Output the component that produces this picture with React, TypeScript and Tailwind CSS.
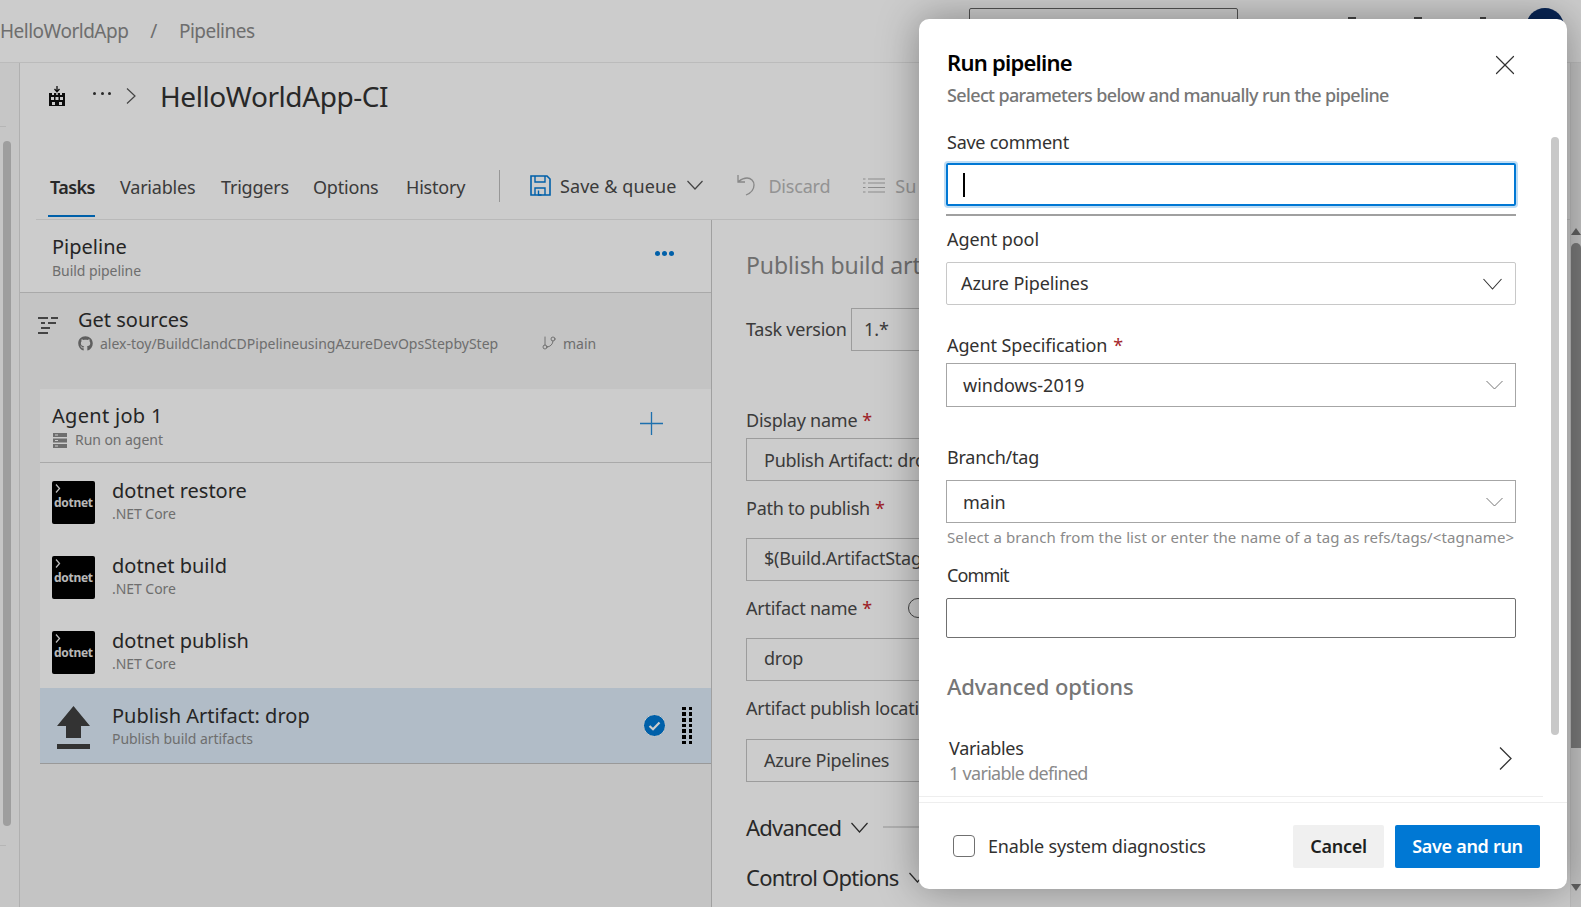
import React from "react";
import { X, GitBranch } from "lucide-react";
import { FaGithub } from "react-icons/fa";

const font = "[font-family:'Noto_Sans',sans-serif]";

function Chev({ w = 16, h = 8, color = "#333", sw = 1.2 }: { w?: number; h?: number; color?: string; sw?: number }) {
  return (
    <svg width={w} height={h + 2} viewBox={`0 0 ${w} ${h + 2}`} fill="none" className="shrink-0">
      <polyline points={`0.5,1 ${w / 2},${h + 1} ${w - 0.5},1`} stroke={color} strokeWidth={sw} />
    </svg>
  );
}

function Dotnet() {
  return (
    <div className="w-[43px] h-[43px] mt-[4px] bg-black rounded-[2px] shrink-0 flex flex-col overflow-hidden pl-[2px]">
      <svg width="6" height="9" viewBox="0 0 6 9" fill="none" className="mt-[3px] ml-[1px] shrink-0"><polyline points="1,0.5 4.5,4.5 1,8.5" stroke="#e6e6e6" strokeWidth="1.3" /></svg>
      <div className="text-[#e6e6e6] text-[12px] leading-[14px] mt-[3px] font-bold tracking-[-0.3px] whitespace-nowrap">dotnet</div>
    </div>
  );
}

function TaskRow({ name, sub, icon, selected }: { name: string; sub: string; icon: React.ReactNode; selected?: boolean }) {
  return (
    <div className={`flex items-center pl-[12px] ${selected ? "h-[76px] bg-[#deecf9] border-b border-[#c0c0c0]" : "h-[75px]"}`}>
      <div className="w-[43px] flex justify-center shrink-0">{icon}</div>
      <div className="ml-[17px] flex-1 -mt-[2px]">
        <div className="text-[20px] leading-[28px] text-[#2f2f2f]">{name}</div>
        <div className="text-[14px] leading-[18px] text-[#8a8a8a] tracking-[-0.05px]">{sub}</div>
      </div>
      {selected && (
        <div className="flex items-center mr-[19px] gap-[16px]">
          <div className="w-[23px] h-[23px] rounded-full bg-[#0078d4] border border-white flex items-center justify-center">
            <svg width="13" height="10" viewBox="0 0 13 10" fill="none"><polyline points="1.5,5 5,8.2 11.5,1.5" stroke="white" strokeWidth="2.2" /></svg>
          </div>
          <div className="grid grid-cols-2 gap-x-[3px] gap-y-[2.2px]">
            {Array.from({ length: 14 }).map((_, i) => (
              <div key={i} className="w-[3.5px] h-[3.5px] bg-black" />
            ))}
          </div>
        </div>
      )}
    </div>
  );
}

function Label({ children, star, className = "" }: { children: React.ReactNode; star?: boolean; className?: string }) {
  return (
    <div className={`text-[18px] leading-[24px] text-[#4a4a4a] tracking-[-0.25px] whitespace-nowrap ${className}`}>
      {children}
      {star && <span className="text-[#c4262e] ml-[5px]">*</span>}
    </div>
  );
}

function BgInput({ children, className = "" }: { children: React.ReactNode; className?: string }) {
  return (
    <div className={`w-[500px] h-[43px] border border-[#c4c4c4] flex items-center pl-[17px] text-[18px] text-[#4a4a4a] tracking-[-0.25px] whitespace-nowrap ${className}`}>
      {children}
    </div>
  );
}

function MLabel({ children, star, className = "" }: { children: React.ReactNode; star?: boolean; className?: string }) {
  return (
    <div className={`text-[18px] leading-[24px] text-[#323130] whitespace-nowrap ${className}`}>
      {children}
      {star && <span className="text-[#a4262c] ml-[6px]">*</span>}
    </div>
  );
}

function Tab({ children, active, w }: { children: React.ReactNode; active?: boolean; w: string }) {
  return (
    <div className={`${w} h-full flex flex-col shrink-0`}>
      <div className={`mt-[46px] text-[18px] leading-[24px] whitespace-nowrap ${active ? "font-semibold text-[#333] tracking-[-0.6px] ml-[1px]" : "text-[#4a4a4a] tracking-[-0.2px]"}`}>{children}</div>
      {active && <div className="mt-[16px] h-[2px] w-[47px] -ml-[1px] bg-[#0078d4]" />}
    </div>
  );
}

export default function App() {
  return (
    <div className={`relative w-[1581px] h-[907px] overflow-hidden bg-white flex flex-col ${font}`}>
      {/* top bar */}
      <div className="h-[63px] shrink-0 border-b border-[#eaeaea] flex">
        <div className="w-[969px] shrink-0 flex items-center text-[19px] text-[#8a8a8a] tracking-[-0.5px] whitespace-nowrap mt-[1px]">
          <span>HelloWorldApp</span>
          <span className="ml-[22px]">/</span>
          <span className="ml-[22px]">Pipelines</span>
        </div>
        <div className="w-[269px] h-[32px] mt-[8px] border border-[#666] rounded-[2px] shrink-0" />
        <div className="w-[289px] shrink-0 flex pt-[17px] pl-[110px] gap-[58px]">
          <div className="w-[8px] h-[8px] bg-[#555]" />
          <div className="w-[8px] h-[8px] bg-[#555]" />
          <div className="w-[6px] h-[8px] bg-[#555]" />
        </div>
        <div className="w-[38px] h-[38px] mt-[8px] rounded-full bg-[#0b2f6b] shrink-0 -ml-[1px]" />
      </div>

      <div className="flex-1 min-h-0 flex">
        {/* left rail */}
        <div className="w-[20px] shrink-0 border-r border-[#dcdcdc] bg-[#f8f8f8] flex flex-col">
          <div className="h-[64px] w-[6px] border-b border-[#e4e4e4] shrink-0" />
          <div className="w-[8px] h-[685px] ml-[3px] mt-[14px] rounded-[4px] bg-[#c6c6c6] shrink-0" />
          <div className="h-[1px] w-[6px] mt-[19px] bg-[#e4e4e4] shrink-0" />
        </div>

        {/* main */}
        <div className="flex-1 min-w-0 flex flex-col">
          <div className="h-[66px] shrink-0 flex items-center pl-[28px]">
            <svg width="18" height="20" viewBox="0 0 18 20" className="shrink-0">
              <path d="M9 0v4.5M6.5 3 9 5.7 11.5 3" stroke="#111" strokeWidth="1.3" fill="none" />
              <path fillRule="evenodd" d="M1 7h3v2h2V7h2.2v2h1.6V7H12v2h2V7h3v13H1zM3 11v3h3v-3zM7.5 11v3h3v-3zM12 11v3h3v-3zM4 16v3h3v-3zM11 16v3h3v-3z" fill="#111" />
            </svg>
            <span className="ml-[26px] w-[20px] -mt-[6px] flex justify-between px-[1px] shrink-0">
              <i className="w-[3px] h-[3px] rounded-full bg-[#333] block" />
              <i className="w-[3px] h-[3px] rounded-full bg-[#333] block" />
              <i className="w-[3px] h-[3px] rounded-full bg-[#333] block" />
            </span>
            <svg width="10" height="16" viewBox="0 0 10 16" fill="none" className="ml-[14px] shrink-0"><polyline points="1,0.5 9,8 1,15.5" stroke="#555" strokeWidth="1.2" /></svg>
            <span className="ml-[24px] text-[28px] text-[#333] tracking-[-0.42px] whitespace-nowrap">HelloWorldApp-CI</span>
          </div>

          <div className="h-[91px] shrink-0 border-b border-[#e8e8e8] ml-[16px] pl-[13px] flex">
            <Tab active w="w-[71px]">Tasks</Tab>
            <Tab w="w-[101px]">Variables</Tab>
            <Tab w="w-[92px]">Triggers</Tab>
            <Tab w="w-[93px]">Options</Tab>
            <Tab w="w-[93px]">History</Tab>
            <div className="w-[1px] h-[32px] mt-[41px] bg-[#bdbdbd] shrink-0" />
            <div className="flex h-[24px] mt-[44px] items-center whitespace-nowrap text-[18px]">
              <svg width="21" height="21" viewBox="0 0 21 21" fill="none" className="ml-[30px] shrink-0">
                <path d="M1 1h16l3 3v16H1z" stroke="#0078d4" strokeWidth="1.6" />
                <path d="M5 1v6h10V1M5 20v-7h10v7M8.5 15.5v4.5h3" stroke="#0078d4" strokeWidth="1.4" />
              </svg>
              <span className="ml-[9px] text-[#4a4a4a] mt-[2px] tracking-[0.08px]">Save &amp; queue</span>
              <span className="ml-[11px]"><Chev color="#555" /></span>
              <svg width="20" height="22" viewBox="0 0 20 22" fill="none" className="ml-[33px] shrink-0">
                <path d="M2 1v7h7M2.5 7.5C5 5.5 8 4 11 4c4 0 7 3 7 7 0 4-3 8-8 10" stroke="#aaa" strokeWidth="1.3" />
              </svg>
              <span className="ml-[12px] text-[#b8b8b8] mt-[2px] tracking-[-0.2px]">Discard</span>
              <svg width="22" height="15" viewBox="0 0 22 15" fill="none" stroke="#b0b0b0" strokeWidth="1.2" className="ml-[33px] shrink-0">
                <path d="M0 1h2.5M5 1h17M0 5h2.5M5 5h17M0 9.5h2.5M5 9.5h17M0 14h2.5M5 14h17" />
              </svg>
              <span className="ml-[10px] text-[#b8b8b8] mt-[2px]">Su</span>
            </div>
          </div>

          <div className="flex-1 min-h-0 flex">
            {/* left pane */}
            <div className="w-[692px] shrink-0 border-r border-[#c8c8c8] bg-[#f5f5f5] flex flex-col">
              <div className="h-[73px] bg-white border-b border-[#d4d4d4] shrink-0 flex items-center pl-[32px] pr-[37px]">
                <div className="flex-1">
                  <div className="text-[20px] leading-[28px] text-[#2f2f2f]">Pipeline</div>
                  <div className="text-[14px] leading-[18px] mt-[1px] text-[#8a8a8a] tracking-[-0.05px]">Build pipeline</div>
                </div>
                <div className="flex gap-[2px] -mt-[5px]">
                  <i className="w-[5px] h-[5px] rounded-full bg-[#0078d4] block" />
                  <i className="w-[5px] h-[5px] rounded-full bg-[#0078d4] block" />
                  <i className="w-[5px] h-[5px] rounded-full bg-[#0078d4] block" />
                </div>
              </div>
              <div className="h-[96px] shrink-0 flex pl-[18px]">
                <svg width="20" height="17" viewBox="0 0 20 17" fill="none" stroke="#222" strokeWidth="1.5" className="mt-[24px] shrink-0">
                  <path d="M0 1h10M13 1h7M3 6h4M10 6h8M3 11h9M0 16h10" />
                </svg>
                <div className="ml-[20px]">
                  <div className="mt-[13px] text-[20px] leading-[28px] text-[#2f2f2f]">Get sources</div>
                  <div className="flex items-center -mt-[1px] h-[20px] text-[14px] text-[#8a8a8a] whitespace-nowrap">
                    <FaGithub size={15} color="#777" className="shrink-0" />
                    <span className="ml-[7px] w-[441px] shrink-0">alex-toy/BuildClandCDPipelineusingAzureDevOpsStepbyStep</span>
                    <GitBranch size={16} strokeWidth={1.2} color="#777" className="shrink-0" />
                    <span className="ml-[6px]">main</span>
                  </div>
                </div>
              </div>
              <div className="ml-[20px] bg-white shrink-0">
                <div className="h-[74px] border-b border-[#d4d4d4] flex items-center pl-[12px] pr-[48px]">
                  <div className="flex-1">
                    <div className="text-[20px] leading-[28px] text-[#2f2f2f] tracking-[0.3px]">Agent job 1</div>
                    <div className="flex items-center text-[14px] leading-[18px] mt-[1px] text-[#8a8a8a] tracking-[-0.05px] ml-[1px]">
                      <svg width="14" height="15" viewBox="0 0 14 15" className="shrink-0" fill="#8a8a8a">
                        <path fillRule="evenodd" d="M0 0h14v4H0zM0 5.5h14v4H0zM0 11h14v4H0zM2 1.5v1h3v-1zM2 7v1h3V7zM2 12.5v1h3v-1z" />
                      </svg>
                      <span className="ml-[8px]">Run on agent</span>
                    </div>
                  </div>
                  <svg width="23" height="23" viewBox="0 0 23 23" className="shrink-0 -mt-[4px]"><path d="M11.5 0v23M0 11.5h23" stroke="#0078d4" strokeWidth="1.3" opacity="0.85" /></svg>
                </div>
                <TaskRow name="dotnet restore" sub=".NET Core" icon={<Dotnet />} />
                <TaskRow name="dotnet build" sub=".NET Core" icon={<Dotnet />} />
                <TaskRow name="dotnet publish" sub=".NET Core" icon={<Dotnet />} />
                <TaskRow
                  selected
                  name="Publish Artifact: drop"
                  sub="Publish build artifacts"
                  icon={
                    <svg width="33" height="43" viewBox="0 0 33 43" fill="#404040" className="mt-[3px]">
                      <path d="M16.5 0 33 20H24V32H9V20H0z" />
                      <rect x="0" y="38" width="33" height="5" />
                    </svg>
                  }
                />
              </div>
            </div>

            {/* right pane */}
            <div className="w-[208px] shrink-0 overflow-hidden pl-[34px]">
              <div className="mt-[30px] text-[23px] leading-[30px] text-[#8a8a8a] tracking-[-0.1px] whitespace-nowrap">Publish build artifacts</div>
              <div className="mt-[28px] flex items-center">
                <Label className="w-[105px] shrink-0 -mt-[2px]">Task version</Label>
                <div className="w-[200px] h-[43px] border border-[#c4c4c4] flex items-center pl-[12px] text-[18px] text-[#4a4a4a] shrink-0">1.*</div>
              </div>
              <Label star className="mt-[57px]">Display name</Label>
              <BgInput className="mt-[6px] pt-[2px]">Publish Artifact: drop</BgInput>
              <Label star className="mt-[15px]">Path to publish</Label>
              <BgInput className="mt-[18px] pb-[2px]">$(Build.ArtifactStagingDirectory)</BgInput>
              <div className="mt-[15px] flex items-center">
                <Label star>Artifact name</Label>
                <div className="ml-[36px] w-[20px] h-[20px] rounded-full border border-[#555] shrink-0" />
              </div>
              <BgInput className="mt-[18px] pb-[2px]">drop</BgInput>
              <Label className="mt-[15px]">Artifact publish location</Label>
              <BgInput className="mt-[19px]">Azure Pipelines</BgInput>
              <div className="mt-[30px] flex items-center h-[30px] text-[22px] text-[#333] tracking-[-0.75px] whitespace-nowrap">
                <span>Advanced</span>
                <span className="ml-[10px]"><Chev w={17} h={9} /></span>
                <div className="ml-[15px] h-[2px] w-[100px] bg-[#ddd] shrink-0" />
              </div>
              <div className="mt-[20px] flex items-center h-[30px] text-[22px] text-[#333] tracking-[-0.75px] whitespace-nowrap">
                <span>Control Options</span>
                <span className="ml-[10px]"><Chev w={17} h={9} /></span>
              </div>
            </div>
            <div className="flex-1 min-w-0" />
          </div>
        </div>

        {/* page scrollbar */}
        <div className="w-[11px] shrink-0 bg-[#f2f2f2] flex flex-col items-center pt-[165px] border-l border-[#e8e8e8]">
          <div className="w-0 h-0 border-l-[5px] border-r-[5px] border-b-[7px] border-l-transparent border-r-transparent border-b-[#777]" />
          <div className="w-[10px] h-[505px] mt-[8px] bg-[#969696] rounded-t-[5px] shrink-0" />
          <div className="w-0 h-0 border-l-[5px] border-r-[5px] border-t-[7px] border-l-transparent border-r-transparent border-t-[#777] mt-[136px] shrink-0" />
        </div>
      </div>

      {/* dim */}
      <div className="absolute inset-0 bg-black/20" />

      {/* dialog */}
      <div className="absolute left-[919px] top-[19px] w-[648px] h-[870px] bg-white rounded-[10px] shadow-[0_0_40px_rgba(0,0,0,0.35)] flex flex-col overflow-hidden">
        <div className="px-[27px] flex-1 min-h-0 flex flex-col">
          <div className="mt-[27px] flex items-center h-[32px] pl-[1px]">
            <div className="text-[22px] font-semibold text-black tracking-[-0.75px] flex-1 whitespace-nowrap">Run pipeline</div>
            <X size={34} strokeWidth={0.85} color="#333" className="mr-[18px] -my-[1px] mt-[4px]" />
          </div>
          <div className="mt-[5px] pl-[1px] text-[18px] leading-[24px] text-[#767676] font-medium tracking-[-0.63px] whitespace-nowrap">Select parameters below and manually run the pipeline</div>
          <MLabel className="mt-[23px] pl-[1px] tracking-[-0.25px]">Save comment</MLabel>
          <div className="mt-[9px] w-[570px] h-[43px] border-2 border-[#0078d4] rounded-[2px] shadow-[0_0_0_2px_rgba(0,120,212,0.25)] flex items-center pl-[15px] shrink-0">
            <div className="w-[2px] h-[24px] bg-black" />
          </div>
          <div className="mt-[8px] w-[570px] h-[2px] bg-[#a0a0a0] shrink-0" />
          <MLabel className="mt-[11px] pl-[1px] tracking-[-0.05px]">Agent pool</MLabel>
          <div className="mt-[11px] w-[570px] h-[43px] border border-[#c8c8c8] rounded-[2px] flex items-center justify-between pl-[14px] pr-[13px] text-[18px] text-[#323130] tracking-[-0.1px] shrink-0">
            <span>Azure Pipelines</span><Chev w={19} h={10} color="#333" sw={1.1} />
          </div>
          <MLabel star className="mt-[28px] pl-[1px] tracking-[-0.1px]">Agent Specification</MLabel>
          <div className="mt-[6px] w-[570px] h-[44px] border border-[#a6a6a6] flex items-center justify-between pl-[16px] pr-[12px] text-[18px] text-[#323130] shrink-0">
            <span>windows-2019</span><Chev w={17} h={8} color="#777" sw={1} />
          </div>
          <MLabel className="mt-[38px] pl-[1px] tracking-[-0.2px]">Branch/tag</MLabel>
          <div className="mt-[11px] w-[570px] h-[43px] border border-[#a6a6a6] flex items-center justify-between pl-[16px] pr-[12px] text-[18px] text-[#323130] shrink-0">
            <span className="mt-[1px]">main</span><Chev w={17} h={8} color="#777" sw={1} />
          </div>
          <div className="mt-[4px] pl-[1px] text-[15px] leading-[20px] text-[#8a8a8a] tracking-[0.12px] whitespace-nowrap">Select a branch from the list or enter the name of a tag as refs/tags/&lt;tagname&gt;</div>
          <MLabel className="mt-[16px] pl-[1px] tracking-[-0.9px]">Commit</MLabel>
          <div className="mt-[11px] w-[570px] h-[40px] border border-[#707070] rounded-[2px] shrink-0" />
          <div className="mt-[33px] pl-[1px] text-[22px] leading-[30px] font-medium text-[#767676] tracking-[-0.1px] whitespace-nowrap">Advanced options</div>
          <div className="mt-[35px] pl-[3px] pr-[4px] flex items-center w-[570px] shrink-0">
            <div className="flex-1">
              <MLabel className="tracking-[-0.3px]">Variables</MLabel>
              <div className="mt-[1px] text-[18px] leading-[24px] text-[#8a8a8a] tracking-[-0.7px]">1 variable defined</div>
            </div>
            <svg width="13" height="23" viewBox="0 0 13 23" fill="none" className="shrink-0 mt-[-4px]"><polyline points="1,0.5 12,11.5 1,22.5" stroke="#333" strokeWidth="1.3" /></svg>
          </div>
          <div className="mt-[11px] -mx-[27px] w-[624px] h-[1px] bg-[#eeeeee] shrink-0" />
        </div>
        <div className="mt-[6px] h-[87px] shrink-0 border-t border-[#eeeeee] flex items-center pl-[34px] pr-[27px]">
          <div className="w-[22px] h-[22px] border border-[#707070] rounded-[4px] shrink-0" />
          <div className="ml-[13px] flex-1 text-[18px] text-[#323130] tracking-[-0.18px] whitespace-nowrap">Enable system diagnostics</div>
          <div className="w-[91px] h-[43px] rounded-[2px] bg-[#f0f0f0] flex items-center justify-center text-[18px] font-semibold text-[#201f1e] tracking-[-0.3px] pt-[1px]">Cancel</div>
          <div className="ml-[11px] w-[145px] h-[43px] rounded-[2px] bg-[#0078d4] flex items-center justify-center text-[18px] font-semibold text-white tracking-[-0.3px] whitespace-nowrap pt-[1px]">Save and run</div>
        </div>
        <div className="absolute left-[632px] top-[118px] w-[8px] h-[598px] rounded-[4px] bg-[#c8c8c8]" />
      </div>
    </div>
  );
}
